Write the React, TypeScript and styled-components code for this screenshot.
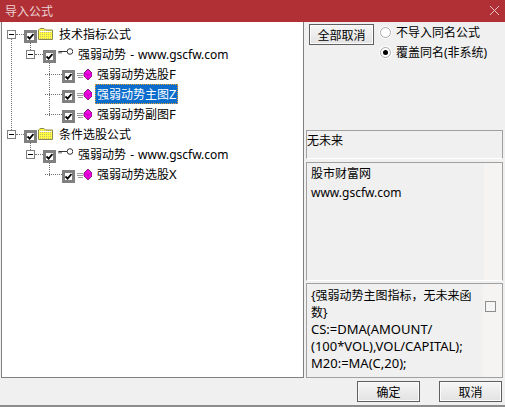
import * as React from 'react'
import styled, { createGlobalStyle } from 'styled-components'

const Global = createGlobalStyle`
    html, body {
        margin: 0;
        padding: 0;
        background: #f0f0f0;
    }
    * {
        box-sizing: border-box;
    }
`

const Dialog = styled.div`
    width: 505px;
    height: 407px;
    overflow: hidden;
    display: flex;
    flex-direction: column;
    background: #f0f0f0;
    color: #000;
    font-family: "Noto Sans", "Noto Sans CJK SC", sans-serif;
    font-size: 12px;
    border-bottom: 2px solid #8c8c8c;
`

const Latin = styled.span`
    font-size: 13px;
`

const Site = styled.span`
    word-spacing: 1px;
`

const TitleBar = styled.div`
    height: 22px;
    flex: none;
    display: flex;
    align-items: center;
    justify-content: space-between;
    padding: 0 5px 1px 5px;
    background: #b03036;
    color: #ecd3d4;
`

const Main = styled.div`
    flex: 1;
    min-height: 0;
    display: flex;
    gap: 2px;
    padding-left: 1px;
`

const Tree = styled.div`
    position: relative;
    width: 303px;
    height: 356px;
    flex: none;
    padding-top: 2px;
    background: #fff;
    border: 1px solid #808080;
    border-top: 0;
`

const Row = styled.div<{ $level: number }>`
    height: 20px;
    display: flex;
    align-items: center;
    padding-left: ${p => 5 + p.$level * 19}px;
`

const Expander = styled.div`
    position: relative;
    width: 9px;
    height: 9px;
    flex: none;
    margin-top: 1px;
    background: #fff;
    border: 1px solid #808080;
    &::after {
        content: '';
        position: absolute;
        left: 1px;
        top: 3px;
        width: 5px;
        height: 1px;
        background: #000;
    }
`

const Dots = styled.div<{ $width: number }>`
    width: ${p => p.$width}px;
    flex: none;
    margin-top: 1px;
    border-top: 1px dotted #707070;
`

const Guide = styled.div<{ $x: number; $y: number; $h: number }>`
    position: absolute;
    left: ${p => p.$x}px;
    top: ${p => p.$y}px;
    height: ${p => p.$h}px;
    border-left: 1px dotted #707070;
`

const Check = styled.div`
    width: 13px;
    height: 13px;
    flex: none;
    margin-top: 4px;
    background: #fff;
    border: 3px solid #808080;
    display: flex;
    align-items: center;
    justify-content: center;
`

const Label = styled.span<{ $selected?: boolean }>`
    margin-left: ${p => (p.$selected ? 3 : 5)}px;
    height: 20px;
    line-height: 21px;
    padding: 0 ${p => (p.$selected ? 2 : 0)}px;
    white-space: nowrap;
    color: ${p => (p.$selected ? '#fff' : '#000')};
    background: ${p => (p.$selected ? '#0a6ccb' : 'transparent')};
    outline: ${p => (p.$selected ? '1px dotted #e8a030' : 'none')};
    outline-offset: -1px;
`

const FolderLabel = styled(Label)`
    margin-left: 6px;
`

const Side = styled.div`
    flex: 1;
    min-width: 0;
    display: flex;
    flex-direction: column;
    padding-right: 2px;
`

const Options = styled.div`
    height: 108px;
    flex: none;
    display: flex;
    gap: 6px;
    padding: 2px 0 0 3px;
`

const Button = styled.button<{ $w: number }>`
    width: ${p => p.$w}px;
    height: 21px;
    padding: 0;
    flex: none;
    font: inherit;
    color: #000;
    background: linear-gradient(#f6f6f6, #e2e2e2);
    border: 1px solid #5f5f5f;
    box-shadow: inset 0 0 0 1px #fbfbfb;
`

const Radios = styled.div`
    display: flex;
    flex-direction: column;
    gap: 2px;
    margin-top: -1px;
`

const RadioRow = styled.div`
    height: 18px;
    display: flex;
    align-items: center;
    gap: 5px;
    white-space: nowrap;
`

const Radio = styled.div<{ $on?: boolean }>`
    width: 11px;
    height: 11px;
    flex: none;
    border-radius: 50%;
    background: #fff;
    border: 1px solid #a8a8a8;
    box-shadow: 0 0 1px 1px #fff;
    display: flex;
    align-items: center;
    justify-content: center;
    &::after {
        content: '';
        width: 5px;
        height: 5px;
        border-radius: 50%;
        background: ${p => (p.$on ? '#000' : 'transparent')};
    }
`

const NoteBox = styled.div`
    height: 29px;
    flex: none;
    line-height: 18px;
    padding-top: 1px;
    border: 1px solid #a0a0a0;
    border-bottom-color: #fff;
`

const InfoBox = styled.div`
    height: 119px;
    flex: none;
    margin-top: 3px;
    background: #f5f4f2;
    border: 1px solid #a0a0a0;
    border-bottom-color: #fff;
`

const InfoText = styled.div`
    width: 177px;
    height: 100%;
    padding: 1px 4px;
    line-height: 19px;
    background: #f0f0f0;
`

const FormulaBox = styled.div`
    position: relative;
    height: 95px;
    flex: none;
    margin-top: 2px;
    background: #f5f4f2;
    border: 1px solid #a0a0a0;
`

const FormulaText = styled.div`
    width: 176px;
    height: 100%;
    padding: 3px 4px;
    line-height: 17px;
    white-space: nowrap;
    background: #f0f0f0;
`

const EmptyCheck = styled.div`
    position: absolute;
    left: 178px;
    top: 17px;
    width: 11px;
    height: 11px;
    background: #f5f5f5;
    border: 1px solid #8e8e8e;
`

const Footer = styled.div`
    height: 27px;
    flex: none;
    display: flex;
    justify-content: flex-end;
    align-items: center;
    gap: 19px;
    padding: 0 3px 0 0;
`

const CheckMark = () => (
    <svg width="7" height="7" viewBox="0 0 7 7" style={{ flex: 'none' }}>
        <path d="M0.5 3.5 L2.6 5.6 L6.5 1" fill="none" stroke="#000" strokeWidth="1.8" />
    </svg>
)

const FolderIcon = () => (
    <svg width="15" height="12" viewBox="0 0 15 12" style={{ flex: 'none', marginLeft: 1, marginTop: -1 }}>
        <defs>
            <pattern id="dither" width="2" height="2" patternUnits="userSpaceOnUse">
                <rect width="2" height="2" fill="#ffff40" />
                <rect width="1" height="1" fill="#c8c070" />
            </pattern>
        </defs>
        <path d="M0.5 11.5 V2 L2 0.5 H6 L7.5 2 H14.5 V11.5 Z" fill="url(#dither)" stroke="#8a8a50" />
        <path d="M1.5 3.5 H13.5" stroke="#fff" />
    </svg>
)

const KeyIcon = () => (
    <svg width="15" height="7" viewBox="0 0 15 7" style={{ flex: 'none', marginLeft: 2, marginTop: -5 }}>
        <circle cx="12" cy="3.5" r="2.8" fill="#fff" stroke="#333" />
        <path d="M9 3.5 H0.5 M1 3.5 V5.5 M3 3.5 V5.5" fill="none" stroke="#333" />
    </svg>
)

const FormulaIcon = () => (
    <svg width="15" height="11" viewBox="0 0 15 11" style={{ flex: 'none', marginLeft: 2 }}>
        <path d="M0 4.5 H6 M0 6.5 H6 M1 8.5 H6" stroke="#9a9a9a" />
        <path d="M11 0 L15 4 V7 L11 11 L7 7 V4 Z" fill="#f400e4" stroke="#601060" strokeWidth="0.8" />
        <path d="M7.5 4 L11 6 L14.5 4 M11 6 V10.5" fill="none" stroke="#b000b0" strokeWidth="0.8" />
    </svg>
)

type LeafItem = { text: string; suffix: string; selected?: boolean }

const rows: LeafItem[] = [
    { text: '强弱动势选股', suffix: 'F' },
    { text: '强弱动势主图', suffix: 'Z', selected: true },
    { text: '强弱动势副图', suffix: 'F' },
]

const Leaf = ({ text, suffix, selected }: LeafItem) => (
    <Row $level={2}>
        <Dots $width={17} />
        <Check><CheckMark /></Check>
        <FormulaIcon />
        <Label $selected={selected}>{text}<Latin>{suffix}</Latin></Label>
    </Row>
)

const Group = ({ title, leaves }: { title: string; leaves: LeafItem[] }) => (
    <>
        <Row $level={0}>
            <Expander />
            <Dots $width={8} />
            <Check><CheckMark /></Check>
            <FolderIcon />
            <FolderLabel>{title}</FolderLabel>
        </Row>
        <Row $level={1}>
            <Expander />
            <Dots $width={8} />
            <Check><CheckMark /></Check>
            <KeyIcon />
            <Label>强弱动势<Site> - www.gscfw.com</Site></Label>
        </Row>
        {leaves.map(l => <Leaf key={l.text} {...l} />)}
    </>
)

export default function App() {
    return (
        <Dialog>
            <Global />
            <TitleBar>
                <span>导入公式</span>
                <svg width="11" height="11" viewBox="0 0 11 11">
                    <path d="M1 1 L10 10 M10 1 L1 10" stroke="#e6c4c6" strokeWidth="1" />
                </svg>
            </TitleBar>
            <Main>
                <Tree>
                    <Guide $x={9} $y={17} $h={91} />
                    <Guide $x={28} $y={20} $h={8} />
                    <Guide $x={47} $y={41} $h={53} />
                    <Guide $x={28} $y={120} $h={8} />
                    <Guide $x={47} $y={141} $h={13} />
                    <Group title="技术指标公式" leaves={rows} />
                    <Group title="条件选股公式" leaves={[{ text: '强弱动势选股', suffix: 'X' }]} />
                </Tree>
                <Side>
                    <Options>
                        <Button $w={65}>全部取消</Button>
                        <Radios>
                            <RadioRow><Radio />不导入同名公式</RadioRow>
                            <RadioRow><Radio $on />覆盖同名(非系统)</RadioRow>
                        </Radios>
                    </Options>
                    <NoteBox>无未来</NoteBox>
                    <InfoBox>
                        <InfoText>
                            股市财富网<br />www.gscfw.com
                        </InfoText>
                    </InfoBox>
                    <FormulaBox>
                        <FormulaText>
                            {'{强弱动势主图指标，无未来函'}<br />
                            {'数}'}<br />
                            <Latin>CS:=DMA(AMOUNT/</Latin><br />
                            <Latin>(100*VOL),VOL/CAPITAL);</Latin><br />
                            <Latin>M20:=MA(C,20);</Latin>
                        </FormulaText>
                        <EmptyCheck />
                    </FormulaBox>
                </Side>
            </Main>
            <Footer>
                <Button $w={63}>确定</Button>
                <Button $w={63}>取消</Button>
            </Footer>
        </Dialog>
    )
}
